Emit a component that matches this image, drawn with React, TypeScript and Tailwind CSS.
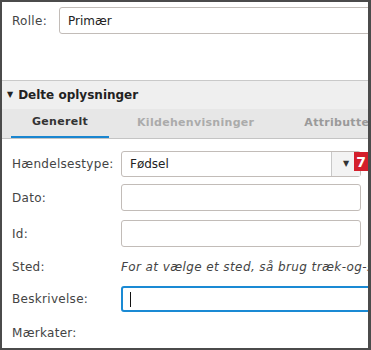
const FONT = "font-['DejaVu_Sans',Verdana,sans-serif]"

function Row({ label, className, children }: { label: string; className: string; children?: React.ReactNode }) {
  return (
    <div className={`flex items-center ${className}`}>
      <div className="w-[119px] shrink-0 pl-[10px] text-[12px] text-[#444] tracking-[0.3px]">{label}</div>
      {children}
    </div>
  )
}

export default function App() {
  return (
    <div className={`w-[371px] h-[350px] overflow-hidden bg-white border-t-2 border-l-2 border-b-2 border-r-[3px] border-[#4b4b4b] ${FONT}`}>
      <div className="flex items-center pt-[5px] h-[32px]">
        <div className="w-[57px] shrink-0 pl-[10px] text-[12px] text-[#444] tracking-[0.3px]">Rolle:</div>
        <div className="w-[330px] shrink-0 h-[27px] border border-[#c2bcb8] rounded-[3px] flex items-center pl-[8px] text-[12px] text-[#222]">
          Primær
        </div>
      </div>

      <div className="mt-[46px] border-t border-[#c9c9c9] bg-[#efefef]">
        <div className="h-[28px] flex items-center pl-[5px] gap-[5px] text-[12px] font-bold text-[#222]">
          <span className="text-[8px] leading-none">▼</span>
          <span>Delte oplysninger</span>
        </div>
        <div className="h-[30px] bg-[#e7e7e7] border-b border-[#c4c4c4] flex items-end text-[11px] font-bold tracking-[0.3px] whitespace-nowrap">
          <div className="w-[98px] shrink-0 ml-[9px] h-full flex items-center justify-center text-[#333] border-b-2 border-[#1a86d0]">
            Generelt
          </div>
          <div className="ml-[28px] shrink-0 h-full flex items-center text-[#ababab]">Kildehenvisninger</div>
          <div className="ml-[50px] shrink-0 h-full flex items-center text-[#9a9a9a]">Attributter</div>
        </div>
      </div>

      <div className="flex flex-col">
        <Row label="Hændelsestype:" className="mt-[12px] h-[26px]">
          <div className="relative w-[240px] shrink-0 h-[26px] border border-[#c2bcb8] rounded-[3px] flex">
            <div className="flex-1 flex items-center pl-[8px] text-[12px] text-[#222]">Fødsel</div>
            <div className="w-[29px] border-l border-[#c8c8c8] bg-[#f3f3f3] flex items-center justify-center">
              <span className="text-[8px] text-[#333] leading-none">▼</span>
            </div>
            <div className="absolute right-[-8px] top-[0px] w-[14px] h-[19px] bg-[#d41f2c] text-white text-[14px] font-bold flex items-center justify-center leading-none">
              7
            </div>
          </div>
        </Row>
        <Row label="Dato:" className="mt-[7px] h-[27px]">
          <div className="w-[240px] shrink-0 h-[27px] border border-[#c2bcb8] rounded-[3px]" />
        </Row>
        <Row label="Id:" className="mt-[9px] h-[27px]">
          <div className="w-[240px] shrink-0 h-[27px] border border-[#c2bcb8] rounded-[3px]" />
        </Row>
        <Row label="Sted:" className="mt-[10px] h-[20px]">
          <div className="whitespace-nowrap italic text-[12px] tracking-[0.4px] text-[#444]">For at vælge et sted, så brug træk-og-slip</div>
        </Row>
        <Row label="Beskrivelse:" className="mt-[9px] h-[26px]">
          <div className="w-[260px] shrink-0 h-[26px] border-2 border-[#1a8ad4] rounded-[3px] flex items-center pl-[7px]">
            <div className="w-px h-[15px] bg-[#111]" />
          </div>
        </Row>
        <Row label="Mærkater:" className="mt-[11px] h-[20px]" />
      </div>
    </div>
  )
}
